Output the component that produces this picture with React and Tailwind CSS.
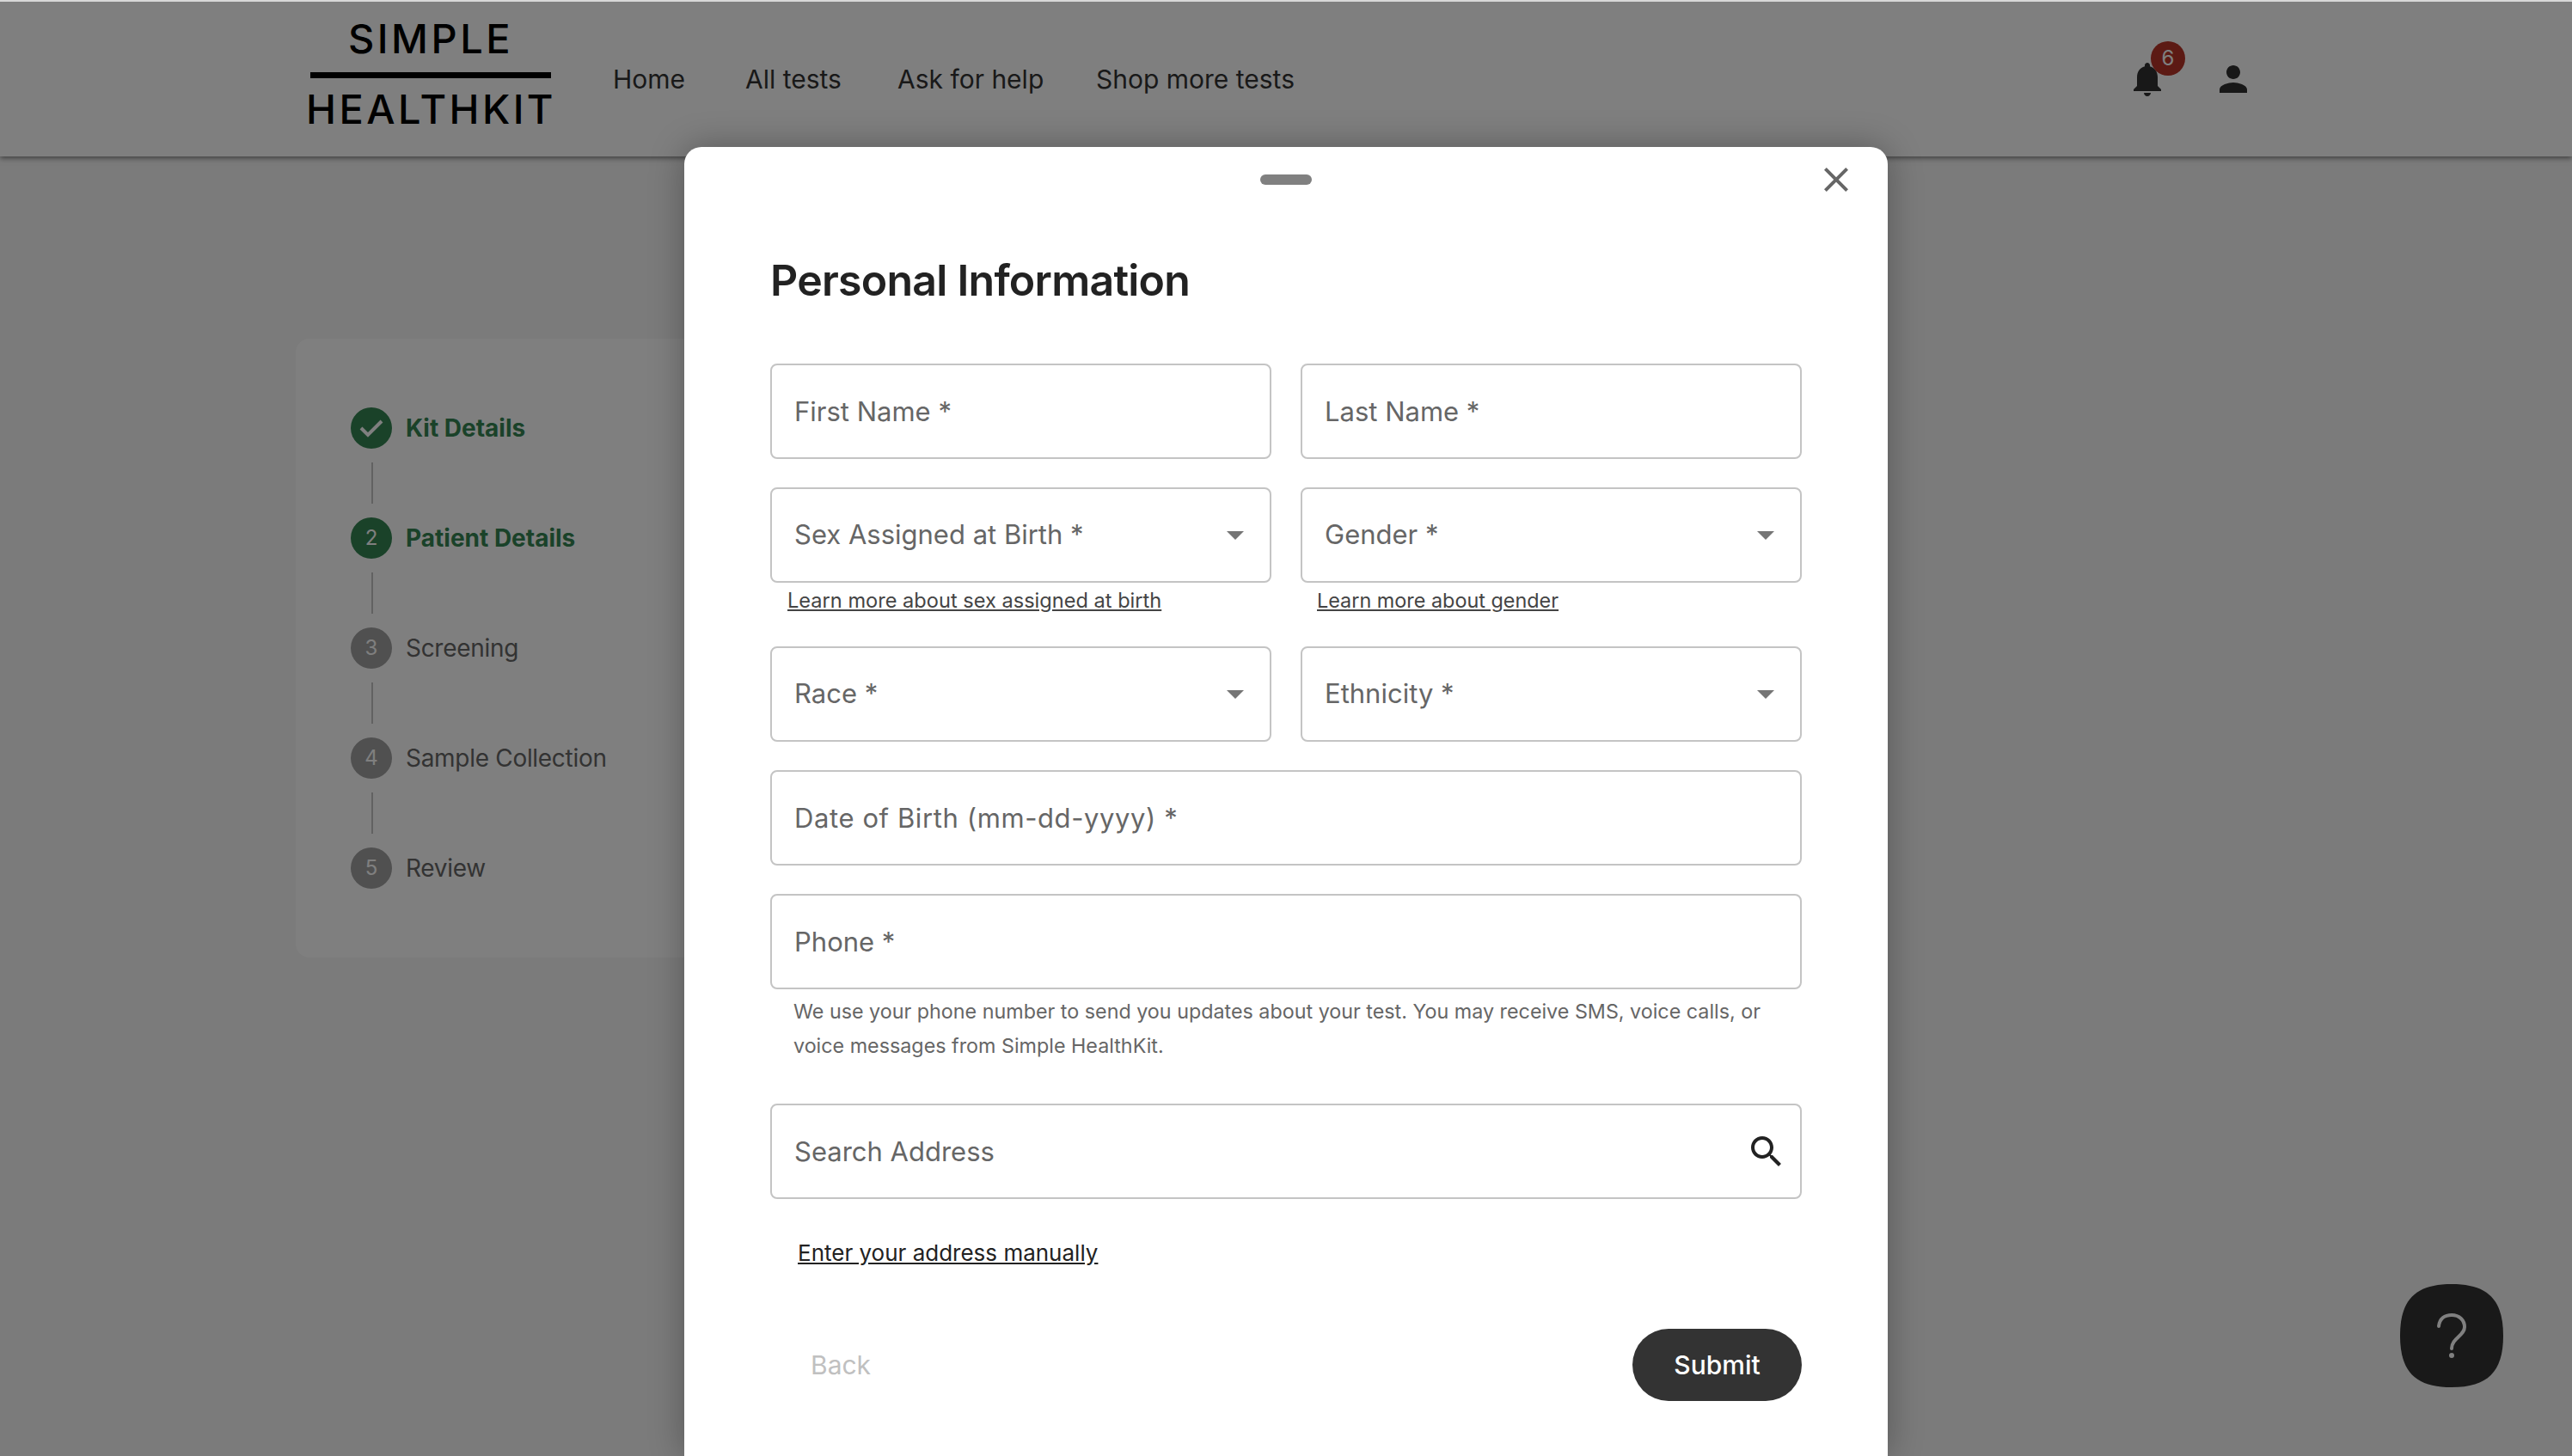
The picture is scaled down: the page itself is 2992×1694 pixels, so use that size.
import React from "react";

const navLinks = [
  { label: "Home", width: "w-[154px]" },
  { label: "All tests", width: "w-[177px]" },
  { label: "Ask for help", width: "w-[231px]" },
  { label: "Shop more tests", width: "" },
];

const steps = [
  { label: "Kit Details", state: "done" },
  { label: "Patient Details", state: "active" },
  { label: "Screening", num: 3 },
  { label: "Sample Collection", num: 4 },
  { label: "Review", num: 5 },
];

function Step({ step, last }) {
  const on = step.state === "done" || step.state === "active";
  return (
    <>
      <div className="flex items-center h-[48px]">
        <div
          className={`w-[48px] h-[48px] rounded-full flex items-center justify-center text-[24px] text-white ${
            on ? "bg-[#348452]" : "bg-[#a0a0a0]"
          }`}
        >
          {step.state === "done" ? (
            <svg width="30" height="24" viewBox="0 0 30 24" fill="none">
              <path d="M3 12 L11 20 L27 4" stroke="#ffffff" strokeWidth="4" />
            </svg>
          ) : (
            step.num || 2
          )}
        </div>
        <span
          className={`ml-[16px] text-[28px] ${
            on ? "font-bold text-[#348452]" : "tracking-[-0.3px] text-[#666666]"
          }`}
        >
          {step.label}
        </span>
      </div>
      {!last && <div className="ml-[24px] w-[2px] h-[48px] my-[16px] bg-[#c4c4c4]" />}
    </>
  );
}

function Field({ label, className = "" }) {
  return (
    <input
      placeholder={label}
      className={`h-[111px] w-full rounded-[8px] border-2 border-[#c4c4c4] px-[26px] text-[31px] placeholder:text-[#666666] outline-none ${className}`}
    />
  );
}

function SelectField({ label }) {
  return (
    <div className="h-[111px] flex items-center justify-between rounded-[8px] border-2 border-[#c4c4c4] pl-[26px] pr-[30px] text-[31px] text-[#666666]">
      <span>{label}</span>
      <svg width="20" height="10" viewBox="0 0 20 10">
        <path d="M0 0 H20 L10 10 Z" fill="#757575" />
      </svg>
    </div>
  );
}

export default function App() {
  return (
    <div className="relative h-[1694px] overflow-hidden bg-[#f6f6f6] font-['Inter',sans-serif]">
      <header className="h-[182px] bg-white border-t-2 border-[#d8d8d8] shadow-[0_2px_6px_rgba(0,0,0,0.5)] flex items-center pl-[358px] pr-[370px] text-[#333333]">
        <div className="w-[286px] flex flex-col items-center text-[#000000]">
          <div className="h-[50px] -mt-[12px] text-[47px] leading-[50px] font-medium tracking-[3.5px]">SIMPLE</div>
          <div className="w-[280px] h-[7px] mt-[14px] bg-black" />
          <div className="h-[50px] mt-[11px] ml-[1px] text-[47px] leading-[50px] font-medium tracking-[3.4px] whitespace-nowrap">
            HEALTHKIT
          </div>
        </div>
        <nav className="ml-[69px] flex items-center text-[30px]">
          {navLinks.map((link) => (
            <a key={link.label} className={link.width}>
              {link.label}
            </a>
          ))}
        </nav>
        <div className="ml-auto flex items-center gap-[52px]">
          <div className="relative w-[48px] h-[48px]">
            <svg width="48" height="48" viewBox="0 0 24 24" fill="#303030">
              <path d="M12 22c1.1 0 2-.9 2-2h-4c0 1.1.89 2 2 2zm6-6v-5c0-3.07-1.64-5.64-4.5-6.32V4c0-.83-.67-1.5-1.5-1.5s-1.5.67-1.5 1.5v.68C7.63 5.36 6 7.92 6 11v5l-2 2v1h16v-1l-2-2z" />
            </svg>
            <span className="absolute -top-[20px] left-[28px] w-[40px] h-[40px] rounded-full bg-[#b83428] text-white text-[24px] flex items-center justify-center">
              6
            </span>
          </div>
          <svg width="48" height="48" viewBox="0 0 24 24" fill="#303030">
            <path d="M12 12c2.21 0 4-1.79 4-4s-1.79-4-4-4-4 1.79-4 4 1.79 4 4 4zm0 2c-2.67 0-8 1.34-8 4v2h16v-2c0-2.66-5.33-4-8-4z" />
          </svg>
        </div>
      </header>

      <main className="pl-[344px] pt-[212px]">
        <aside className="w-[1000px] h-[720px] rounded-[16px] bg-white pl-[64px] pt-[80px]">
          {steps.map((step, i) => (
            <Step key={step.label} step={step} last={i === steps.length - 1} />
          ))}
        </aside>
      </main>

      <div className="absolute inset-x-0 top-[2px] bottom-0 bg-black/50 pt-[169px] flex justify-center">
        <section className="relative w-[1400px] h-full shrink-0 rounded-t-[20px] bg-white px-[100px] shadow-[0_0_40px_rgba(0,0,0,0.3)]">
          <div className="mx-auto mt-[32px] w-[60px] h-[12px] rounded-full bg-[#808080]" />
          <button className="absolute top-[14px] right-[36px]">
            <svg width="48" height="48" viewBox="0 0 24 24" fill="#666666">
              <path d="M19 6.41 17.59 5 12 10.59 6.41 5 5 6.41 10.59 12 5 17.59 6.41 19 12 13.41 17.59 19 19 17.59 13.41 12z" />
            </svg>
          </button>

          <h1 className="mt-[76px] h-[70px] text-[50px] leading-[70px] font-semibold tracking-[-0.75px] text-[#222222]">
            Personal Information
          </h1>

          <div className="mt-[62px] grid grid-cols-2 gap-x-[34px]">
            <Field label="First Name *" />
            <Field label="Last Name *" />
          </div>

          <div className="mt-[33px] grid grid-cols-2 gap-x-[34px]">
            <div>
              <SelectField label="Sex Assigned at Birth *" />
              <a className="block mt-[3px] ml-[20px] text-[23.6px] leading-[36px] underline text-[#444444]">
                Learn more about sex assigned at birth
              </a>
            </div>
            <div>
              <SelectField label="Gender *" />
              <a className="block mt-[3px] ml-[19px] text-[23.4px] leading-[36px] underline text-[#444444]">
                Learn more about gender
              </a>
            </div>
          </div>

          <div className="mt-[35px] grid grid-cols-2 gap-x-[34px]">
            <SelectField label="Race *" />
            <SelectField label="Ethnicity *" />
          </div>

          <Field label="Date of Birth (mm-dd-yyyy) *" className="mt-[33px] tracking-[0.6px]" />
          <Field label="Phone *" className="mt-[33px]" />
          <p className="mt-[6px] px-[27px] text-[23.3px] leading-[40px] text-[#666666]">
            We use your phone number to send you updates about your test. You may receive SMS, voice calls, or voice
            messages from Simple HealthKit.
          </p>

          <div className="relative mt-[47px]">
            <Field label="Search Address" />
            <svg
              className="absolute top-[32px] right-[17px]"
              width="48"
              height="48"
              viewBox="0 0 24 24"
              fill="#222222"
            >
              <path d="M15.5 14h-.79l-.28-.27C15.41 12.59 16 11.11 16 9.5 16 5.91 13.09 3 9.5 3S3 5.91 3 9.5 5.91 16 9.5 16c1.61 0 3.09-.59 4.23-1.57l.27.28v.79l5 4.99L20.49 19l-4.99-5zm-6 0C7.01 14 5 11.99 5 9.5S7.01 5 9.5 5 14 7.01 14 9.5 11.99 14 9.5 14z" />
            </svg>
          </div>

          <a className="block mt-[43px] ml-[32px] text-[26px] leading-[39px] underline text-[#222222]">
            Enter your address manually
          </a>

          <div className="mt-[69px] flex items-center justify-between">
            <button className="ml-[47px] text-[30px] text-[#c0c0c0]">Back</button>
            <button className="w-[197px] h-[84px] rounded-full bg-[#333333] text-white text-[30px] font-medium">
              Submit
            </button>
          </div>
        </section>
      </div>

      <button className="absolute left-[2792px] top-[1494px] w-[120px] h-[120px]">
        <svg width="120" height="120" viewBox="0 0 120 120">
          <path d="M60 0 C102 0 120 18 120 60 C120 102 102 120 60 120 C18 120 0 102 0 60 C0 18 18 0 60 0 Z" fill="#191919" />
          <path
            d="M45 49 C46 40 52 36 60 36 C69 36 75 42 75 50 C75 60 60 63 60 75"
            fill="none"
            stroke="#808080"
            strokeWidth="4"
            strokeLinecap="round"
          />
          <circle cx="60" cy="83" r="3" fill="#808080" />
        </svg>
      </button>
    </div>
  );
}
